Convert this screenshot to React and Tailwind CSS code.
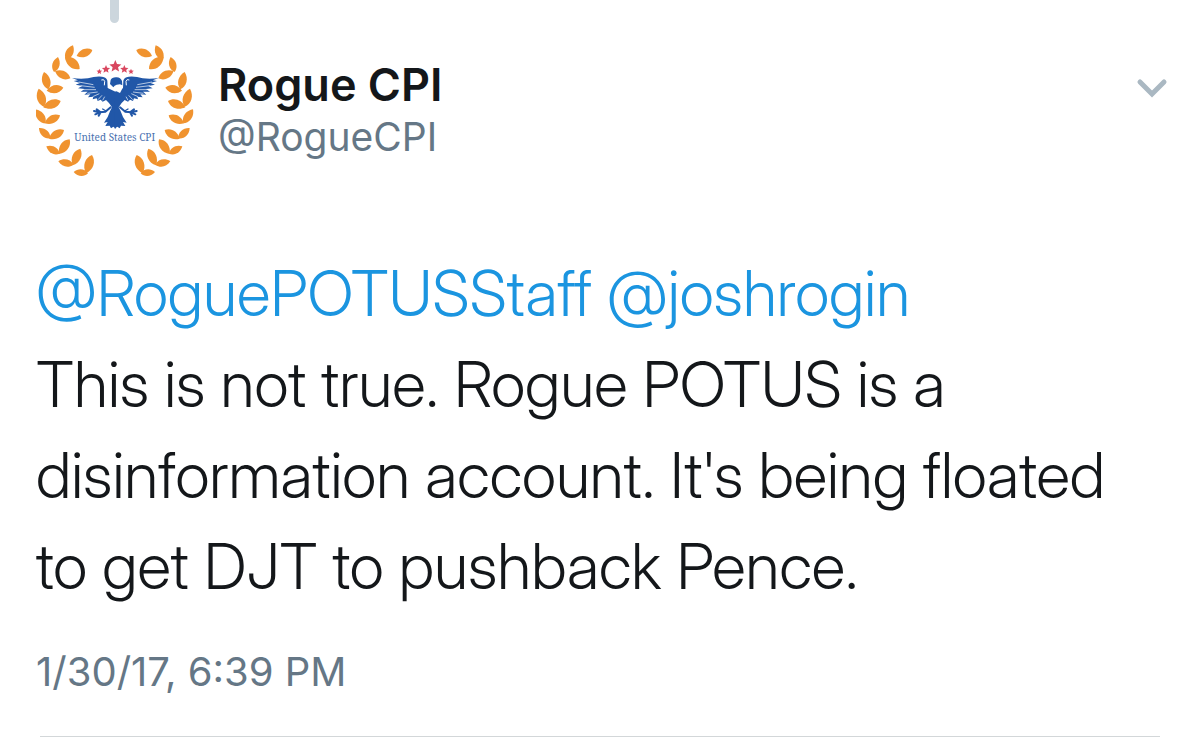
const LEAVES = [
  [140, 168, 187, 150],
  [129, 136, 108, 180],
  [105, 170, 149, 207],
  [84, 171, 72, 216],
  [75, 213, 121, 235],
  [42, 216, 55, 268],
  [50, 272, 100, 263],
  [26, 266, 42, 320],
  [40, 322, 92, 303],
  [17, 328, 46, 370],
  [44, 370, 90, 346],
  [27, 384, 61, 415],
  [57, 416, 102, 390],
  [49, 439, 89, 461],
  [87, 462, 119, 418],
  [85, 484, 130, 494],
  [128, 496, 151, 446],
  [131, 516, 174, 520],
  [168, 520, 186, 465],
]

const STARS = [
  [256, 199, 19],
  [228, 208, 13],
  [283, 208, 13],
  [208, 215, 9],
  [303, 215, 9],
]

// Pointed oval between two tips
function leafPath([x1, y1, x2, y2]) {
  const dx = x2 - x1
  const dy = y2 - y1
  const nx = -dy * 0.31
  const ny = dx * 0.31
  const c = (t, s) => `${x1 + dx * t + nx * s} ${y1 + dy * t + ny * s}`
  return `M${x1} ${y1}C${c(0.3, 1)} ${c(0.75, 1)} ${x2} ${y2}C${c(0.75, -1)} ${c(0.3, -1)} ${x1} ${y1}Z`
}

function starPoints([cx, cy, r]) {
  return Array.from({ length: 10 }, (_, i) => {
    const radius = i % 2 ? r * 0.45 : r
    const angle = (Math.PI / 5) * i - Math.PI / 2
    return `${cx + radius * Math.cos(angle)},${cy + radius * Math.sin(angle)}`
  }).join(' ')
}

// Left wing, half of the body and tail, and one claw
function EagleHalf() {
  return (
    <>
      <path
        fill="#2157a8"
        d="M126 234Q150 238 174 235Q196 228 216 230Q230 231 232 242L233 264L258 276L258 386L250 380L243 385L239 377L226 378L233 366L222 368Q234 354 240 334L246 322Q238 308 228 300L218 305L212 299L203 303L200 295L188 298L190 290L174 292L181 283L163 284L173 275L152 275L164 267L144 265L157 258L137 254L150 249L131 243L144 241Z"
      />
      <g stroke="#fff" strokeWidth="2" fill="none">
        <path d="M146 246L190 254M152 257L194 262M160 269L198 269M172 280L203 276M188 290L208 281M204 299L216 286M218 301L224 290" />
        <path d="M214 240Q222 236 224 244L223 256" strokeWidth="3" />
      </g>
      <g stroke="#2157a8" strokeWidth="6" strokeLinecap="round" fill="none">
        <path d="M242 322L226 335L208 337L192 333M212 337L200 328M210 337L196 343M212 337L206 347" />
        <path d="M228 333L218 327" strokeWidth="4" />
      </g>
    </>
  )
}

function Eagle() {
  return (
    <g>
      <EagleHalf />
      <g transform="matrix(-1 0 0 1 512 0)">
        <EagleHalf />
      </g>
      <path fill="#fff" d="M235 240L244 234L276 234L279 262L270 279L258 273L246 262L235 264Z" />
      <path fill="#2157a8" d="M240 252L242 240Q246 231 260 232Q272 233 276 243L277 256L270 253L260 254Q253 256 250 262Q246 258 240 252Z" />
    </g>
  )
}

function Avatar() {
  return (
    <svg viewBox="18 96 474 474" className="size-[158px] shrink-0" role="img" aria-label="Rogue CPI avatar">
      <g fill="#f0932f">
        {LEAVES.map((leaf, i) => <path key={i} d={leafPath(leaf)} />)}
        <g transform="matrix(-1 0 0 1 506 0)">
          {LEAVES.map((leaf, i) => <path key={i} d={leafPath(leaf)} />)}
        </g>
      </g>
      <g fill="#d9475f">
        {STARS.map((star, i) => <polygon key={i} points={starPoints(star)} />)}
      </g>
      <Eagle />
      <text x="254" y="423" textAnchor="middle" fontSize="30" fill="#4a72b0" className="font-['Noto_Serif','DejaVu_Serif',serif]">
        United States CPI
      </text>
    </svg>
  )
}

export default function App() {
  return (
    <main className="min-h-screen bg-white px-9 font-['Inter',sans-serif] text-[#14171a]">
      <div className="ml-[74px] h-[23px] w-[9px] rounded-b-full bg-[#ccd6dd]" />
      <article>
        <header className="flex items-start pt-[9px]">
          <Avatar />
          <div className="ml-6 flex-1 pt-[27px]">
            <h1 className="text-[45px] leading-[52px] font-semibold">Rogue CPI</h1>
            <a href="#profile" className="block text-[39px] leading-[52px] text-[#657786]">@RogueCPI</a>
          </div>
          <button type="button" aria-label="More options" className="-mr-1 mt-11">
            <svg viewBox="0 0 32 24" className="h-6 w-8" fill="none" stroke="#aab8c2" strokeWidth="5" strokeLinecap="round">
              <path d="M4 6L16 18L28 6" />
            </svg>
          </button>
        </header>
        <p className="mt-[58px] font-['Inter_Display','Inter',sans-serif] text-[63px] leading-[91px] font-light">
          <a href="#roguepotusstaff" className="text-[#1b95e0]">@RoguePOTUSStaff</a>{' '}
          <a href="#joshrogin" className="text-[#1b95e0]">@joshrogin</a>
          <br />
          This is not true. Rogue POTUS is a disinformation account. It's being floated to get DJT to pushback Pence.
        </p>
        <time className="mt-[34px] block text-[40px] leading-[52px] text-[#657786]">1/30/17, 6:39 PM</time>
        <hr className="mx-1 mt-[38px] border-[#d3d7d9]" />
      </article>
    </main>
  )
}
